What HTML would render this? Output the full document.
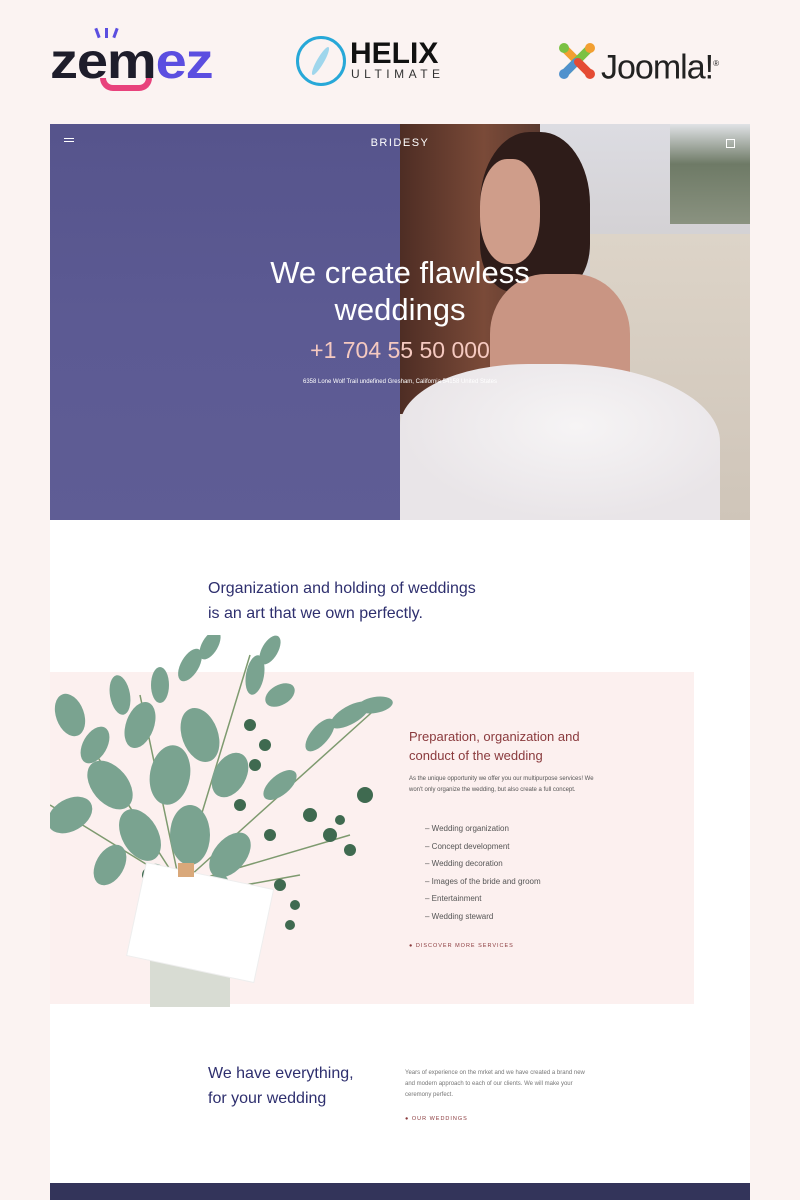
<!DOCTYPE html>
<html><head><meta charset="utf-8"><style>
*{margin:0;padding:0;box-sizing:border-box}
body{width:800px;height:1200px;overflow:hidden;background:#fbf3f2;font-family:"Liberation Sans",sans-serif;position:relative}
.abs{position:absolute}
</style></head><body>
<!-- logos -->
<div class="abs" style="left:50px;top:28px;width:160px;height:65px">
 <div class="abs" style="left:0;top:8px;font:bold 50px 'Liberation Sans',sans-serif;color:#1e1d2b;letter-spacing:-1px;line-height:50px;transform:scaleX(1.12);transform-origin:left">zem<span style="color:#5b4ee0">ez</span></div>
 <div class="abs" style="left:46px;top:0;width:3px;height:10px;background:#5b4ee0;transform:rotate(-20deg)"></div>
 <div class="abs" style="left:55px;top:0;width:3px;height:10px;background:#5b4ee0"></div>
 <div class="abs" style="left:64px;top:0;width:3px;height:10px;background:#5b4ee0;transform:rotate(20deg)"></div>
 <div class="abs" style="left:50px;top:50px;width:52px;height:13px;border:6px solid #e8427c;border-top:none;border-radius:0 0 30px 30px"></div>
</div>
<div class="abs" style="left:296px;top:36px;width:50px;height:50px;border:3px solid #27a8d8;border-radius:50%"></div>
<div class="abs" style="left:317px;top:45px;width:7px;height:32px;background:#9fd6ec;border-radius:50%;transform:rotate(30deg)"></div>
<div class="abs" style="left:350px;top:39px;font:bold 30px 'Liberation Sans',sans-serif;color:#111;line-height:30px">HELIX</div>
<div class="abs" style="left:351px;top:67px;font:12px 'Liberation Sans',sans-serif;color:#333;letter-spacing:4.5px">ULTIMATE</div>
<svg class="abs" style="left:556px;top:40px" width="42" height="42" viewBox="0 0 42 42">
<path d="M8 8 L34 34" stroke="#f29f31" stroke-width="8" stroke-linecap="round"/>
<path d="M34 8 L8 34" stroke="#7ac143" stroke-width="8" stroke-linecap="round"/>
<circle cx="8" cy="8" r="5" fill="#7ac143"/><circle cx="34" cy="8" r="5" fill="#f29f31"/>
<circle cx="8" cy="34" r="5" fill="#5091cd"/><circle cx="34" cy="34" r="5" fill="#e54b34"/>
<path d="M8 34 L20 22" stroke="#5091cd" stroke-width="8" stroke-linecap="round"/>
<path d="M34 34 L22 22" stroke="#e54b34" stroke-width="8" stroke-linecap="round"/>
</svg>
<div class="abs" style="left:601px;top:44px;font:34px 'Liberation Sans',sans-serif;color:#222;line-height:40px;letter-spacing:-1px">Joomla!<sup style="font-size:8px">®</sup></div>

<!-- main card -->
<div class="abs" style="left:50px;top:124px;width:700px;height:1076px;background:#fff"></div>
<!-- hero -->
<div class="abs" style="left:50px;top:124px;width:700px;height:396px;overflow:hidden">
 <div class="abs" style="left:350px;top:0;width:350px;height:396px;background:linear-gradient(180deg,#dcdce2 0%,#d2cfd1 35%,#dcd6d0 60%,#ece8e6 100%)"></div>
 <div class="abs" style="left:350px;top:0;width:140px;height:290px;background:linear-gradient(90deg,#4e2d24,#7a4a38 60%,#5a3a30)"></div>
 <div class="abs" style="left:620px;top:0;width:80px;height:100px;background:linear-gradient(180deg,#e0e2e6,#6e7a66 40%,#8a9280)"></div>
 <div class="abs" style="left:540px;top:110px;width:160px;height:286px;background:linear-gradient(180deg,#ddd4c8,#cfc5b9)"></div>
 <div class="abs" style="left:430px;top:8px;width:110px;height:160px;background:#2e1c19;border-radius:45% 45% 30% 30%"></div>
 <div class="abs" style="left:430px;top:35px;width:60px;height:105px;background:#cf9d8a;border-radius:45%"></div>
 <div class="abs" style="left:440px;top:150px;width:140px;height:150px;background:#c99583;border-radius:40% 40% 10% 10%"></div>
 <div class="abs" style="left:350px;top:240px;width:320px;height:156px;background:radial-gradient(ellipse at 55% 40%,#f6f4f5,#e9e5e8 70%);border-radius:40% 50% 0 0"></div>
 <div class="abs" style="left:0;top:0;width:350px;height:396px;background:linear-gradient(180deg,#56548c,#5c5a93 50%,#5f5d95)"></div>
 <div class="abs" style="left:0;width:700px;text-align:center;top:13px;font:11px 'Liberation Sans',sans-serif;color:#fff;letter-spacing:1.5px">BRIDESY</div>
 <div class="abs" style="left:14px;top:14px;width:10px;height:1px;background:#fff"></div>
 <div class="abs" style="left:14px;top:17px;width:10px;height:1px;background:#fff"></div>
 <div class="abs" style="left:676px;top:15px;width:9px;height:9px;border:1px solid #fff"></div>
 <div class="abs" style="left:0;width:700px;top:130px;text-align:center;font:31px/37px 'Liberation Sans',sans-serif;color:#fff">We create flawless<br>weddings</div>
 <div class="abs" style="left:0;width:700px;top:213px;text-align:center;font:23px 'Liberation Sans',sans-serif;color:#f5c9c0">+1 704 55 50 000</div>
 <div class="abs" style="left:0;width:700px;top:255px;text-align:center;font:6px 'Liberation Sans',sans-serif;color:#fff">6358 Lone Wolf Trail undefined Gresham, California 54158 United States</div>
</div>

<div class="abs" style="left:208px;top:576px;font:16px/25px 'Liberation Sans',sans-serif;color:#2e2f6e">Organization and holding of weddings<br>is an art that we own perfectly.</div>

<!-- pink panel -->
<div class="abs" style="left:50px;top:672px;width:644px;height:332px;background:#fcf0ef"></div>
<svg class="abs" style="left:50px;top:635px" width="350" height="372" viewBox="0 0 350 372">
<g fill="none" stroke="#7e9a6f" stroke-width="1.5">
<path d="M130 250 L90 60 M130 250 L200 20 M130 250 L40 110 M130 250 L330 70 M130 250 L300 200 M140 260 L250 240 M130 250 L0 170"/>
</g>
<g fill="#7aa390">
<ellipse cx="20" cy="80" rx="14" ry="22" transform="rotate(-20 20 80)"/>
<ellipse cx="45" cy="110" rx="12" ry="20" transform="rotate(30 45 110)"/>
<ellipse cx="70" cy="60" rx="10" ry="20" transform="rotate(-10 70 60)"/>
<ellipse cx="90" cy="90" rx="14" ry="24" transform="rotate(20 90 90)"/>
<ellipse cx="110" cy="50" rx="9" ry="18"/>
<ellipse cx="140" cy="30" rx="9" ry="18" transform="rotate(30 140 30)"/>
<ellipse cx="160" cy="10" rx="8" ry="16" transform="rotate(30 160 10)"/>
<ellipse cx="205" cy="40" rx="9" ry="20" transform="rotate(10 205 40)"/>
<ellipse cx="220" cy="15" rx="8" ry="16" transform="rotate(30 220 15)"/>
<ellipse cx="230" cy="60" rx="10" ry="16" transform="rotate(60 230 60)"/>
<ellipse cx="300" cy="80" rx="9" ry="22" transform="rotate(60 300 80)"/>
<ellipse cx="325" cy="70" rx="8" ry="18" transform="rotate(80 325 70)"/>
<ellipse cx="270" cy="100" rx="9" ry="20" transform="rotate(40 270 100)"/>
<ellipse cx="150" cy="100" rx="18" ry="28" transform="rotate(-20 150 100)"/>
<ellipse cx="120" cy="140" rx="20" ry="30" transform="rotate(10 120 140)"/>
<ellipse cx="60" cy="150" rx="18" ry="28" transform="rotate(-40 60 150)"/>
<ellipse cx="20" cy="180" rx="16" ry="24" transform="rotate(60 20 180)"/>
<ellipse cx="180" cy="140" rx="16" ry="24" transform="rotate(30 180 140)"/>
<ellipse cx="90" cy="200" rx="18" ry="28" transform="rotate(-30 90 200)"/>
<ellipse cx="140" cy="200" rx="20" ry="30"/>
<ellipse cx="180" cy="220" rx="16" ry="26" transform="rotate(40 180 220)"/>
<ellipse cx="230" cy="150" rx="10" ry="20" transform="rotate(50 230 150)"/>
<ellipse cx="60" cy="230" rx="14" ry="22" transform="rotate(30 60 230)"/>
<ellipse cx="110" cy="250" rx="14" ry="22" transform="rotate(-20 110 250)"/>
<ellipse cx="165" cy="260" rx="14" ry="22" transform="rotate(20 165 260)"/>
</g>
<g fill="#3f6a50">
<circle cx="200" cy="90" r="6"/><circle cx="215" cy="110" r="6"/><circle cx="205" cy="130" r="6"/><circle cx="190" cy="170" r="6"/>
<circle cx="260" cy="180" r="7"/><circle cx="280" cy="200" r="7"/><circle cx="300" cy="215" r="6"/><circle cx="315" cy="160" r="8"/>
<circle cx="230" cy="250" r="6"/><circle cx="245" cy="270" r="5"/><circle cx="100" cy="240" r="8"/><circle cx="160" cy="250" r="8"/>
<circle cx="240" cy="290" r="5"/><circle cx="290" cy="185" r="5"/><circle cx="220" cy="200" r="6"/>
</g>
<rect x="100" y="320" width="80" height="52" fill="#d8dcd3"/>
<rect x="85" y="240" width="130" height="95" fill="#fff" transform="rotate(12 150 288)" stroke="#eee"/>
<rect x="128" y="228" width="16" height="14" fill="#d9a87a"/>
</svg>
<div class="abs" style="left:409px;top:727px;font:13px/19px 'Liberation Sans',sans-serif;color:#8a3a3d">Preparation, organization and<br>conduct of the wedding</div>
<div class="abs" style="left:409px;top:774px;font:6px/11px 'Liberation Sans',sans-serif;color:#555;width:185px">As the unique opportunity we offer you our multipurpose services! We won't only organize the wedding, but also create a full concept.</div>
<div class="abs" style="left:425px;top:820px;font:8px/17.5px 'Liberation Sans',sans-serif;color:#555">– Wedding organization<br>– Concept development<br>– Wedding decoration<br>– Images of the bride and groom<br>– Entertainment<br>– Wedding steward</div>
<div class="abs" style="left:409px;top:943px;font:5.5px 'Liberation Sans',sans-serif;color:#8a3a3d;letter-spacing:1px">● DISCOVER MORE SERVICES</div>

<div class="abs" style="left:208px;top:1061px;font:16px/25px 'Liberation Sans',sans-serif;color:#2e2f6e">We have everything,<br>for your wedding</div>
<div class="abs" style="left:405px;top:1068px;font:6px/11px 'Liberation Sans',sans-serif;color:#777;width:180px">Years of experience on the mrket and we have created a brand new and modern approach to each of our clients. We will make your ceremony perfect.</div>
<div class="abs" style="left:405px;top:1116px;font:5.5px 'Liberation Sans',sans-serif;color:#8a3a3d;letter-spacing:1px">● OUR WEDDINGS</div>
<div class="abs" style="left:50px;top:1183px;width:700px;height:17px;background:#33345a"></div>
</body></html>
